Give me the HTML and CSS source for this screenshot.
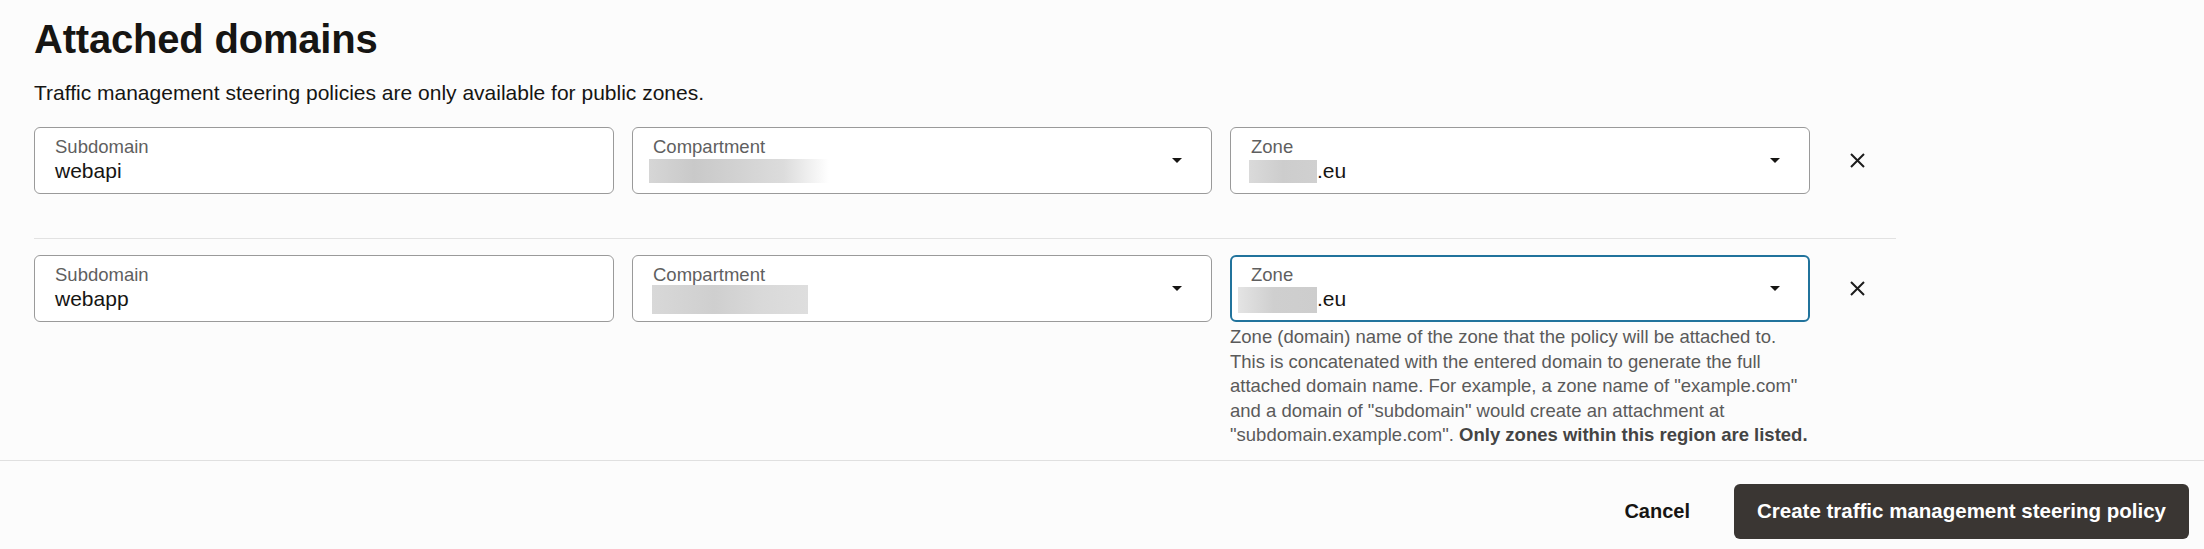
FILE: index.html
```html
<!DOCTYPE html>
<html lang="en">
<head>
<meta charset="utf-8">
<title>Attached domains</title>
<link rel="stylesheet" href="styles.css">
</head>
<body>
<div class="page">
  <section class="content">
    <h2 class="title">Attached domains</h2>
    <p class="intro">Traffic management steering policies are only available for public zones.</p>

    <div class="row row-first">
      <div class="field">
        <div class="field-body">
          <div class="label">Subdomain</div>
          <div class="value">webapi</div>
        </div>
      </div>
      <div class="field">
        <div class="field-body">
          <div class="label">Compartment</div>
          <div class="value"><span class="blur blur-c1"></span></div>
        </div>
        <svg class="caret" width="10" height="5" viewBox="0 0 10 5"><path d="M0 0H10L5 5Z"/></svg>
      </div>
      <div class="field">
        <div class="field-body">
          <div class="label">Zone</div>
          <div class="value"><span class="blur blur-z1"></span><span>.eu</span></div>
        </div>
        <svg class="caret" width="10" height="5" viewBox="0 0 10 5"><path d="M0 0H10L5 5Z"/></svg>
      </div>
      <button class="remove" aria-label="Remove">
        <svg width="15" height="15" viewBox="0 0 15 15"><path d="M1 1L14 14M14 1L1 14"/></svg>
      </button>
    </div>

    <div class="row">
      <div class="field">
        <div class="field-body">
          <div class="label">Subdomain</div>
          <div class="value">webapp</div>
        </div>
      </div>
      <div class="field">
        <div class="field-body">
          <div class="label">Compartment</div>
          <div class="value"><span class="blur blur-c2"></span></div>
        </div>
        <svg class="caret" width="10" height="5" viewBox="0 0 10 5"><path d="M0 0H10L5 5Z"/></svg>
      </div>
      <div class="zone-col">
        <div class="field focused">
          <div class="field-body">
            <div class="label">Zone</div>
            <div class="value"><span class="blur blur-z2"></span><span>.eu</span></div>
          </div>
          <svg class="caret" width="10" height="5" viewBox="0 0 10 5"><path d="M0 0H10L5 5Z"/></svg>
        </div>
        <p class="help">Zone (domain) name of the zone that the policy will be attached to. This is concatenated with the entered domain to generate the full attached domain name. For example, a zone name of "example.com" and a domain of "subdomain" would create an attachment at "subdomain.example.com". <strong>Only zones within this region are listed.</strong></p>
      </div>
      <button class="remove" aria-label="Remove">
        <svg width="15" height="15" viewBox="0 0 15 15"><path d="M1 1L14 14M14 1L1 14"/></svg>
      </button>
    </div>
  </section>

  <footer class="footer">
    <button class="btn-cancel">Cancel</button>
    <button class="btn-primary">Create traffic management steering policy</button>
  </footer>
</div>
</body>
</html>
```
FILE: styles.css
```css
* { box-sizing: border-box; }

html, body {
  margin: 0;
  padding: 0;
  background: #fcfcfc;
}

body {
  font-family: "Liberation Sans", Arial, sans-serif;
  color: #161513;
}

.page {
  width: 2204px;
  height: 549px;
  overflow: hidden;
}

.content {
  padding: 0 0 0 34px;
}

.title {
  margin: 0;
  padding-top: 16px;
  font-size: 40px;
  line-height: 46px;
  font-weight: 700;
  letter-spacing: -0.2px;
}

.intro {
  margin: 19px 0 0;
  font-size: 21px;
  line-height: 24px;
}

.row {
  width: 1862px;
  display: grid;
  grid-template-columns: 580px 580px 580px 1fr;
  column-gap: 18px;
  align-items: start;
}

.row-first {
  margin-top: 22px;
  padding-bottom: 44px;
  border-bottom: 1px solid #e2e2e2;
}

.row + .row {
  margin-top: 16px;
}

.field {
  height: 67px;
  display: flex;
  align-items: center;
  background: #fff;
  border: 1px solid #9a9a9a;
  border-radius: 6px;
  padding: 0 29px 0 20px;
}

.field.focused {
  border: 2px solid #21739c;
  padding: 0 28px 0 19px;
}

.field-body {
  flex: 1;
  align-self: flex-start;
  padding-top: 9px;
}

.field.focused .field-body {
  padding-top: 8px;
}

.label {
  font-size: 18.5px;
  line-height: 20px;
  color: #5f5f5f;
}

.value {
  margin-top: 2px;
  height: 24px;
  display: flex;
  align-items: flex-end;
  font-size: 21px;
  line-height: 24px;
  color: #161513;
}

.caret {
  flex: none;
  fill: #161513;
}

.blur {
  display: block;
  flex: none;
}

.blur-c1 {
  width: 180px;
  height: 24px;
  margin-left: -4px;
  background: linear-gradient(90deg, #d6d6d6 0%, #c9c9c9 25%, #d2d2d2 50%, #dcdcdc 75%, rgba(240,240,240,0) 100%);
}

.blur-c2 {
  width: 156px;
  height: 29px;
  margin-left: -1px;
  margin-bottom: -3px;
  background: linear-gradient(90deg, #d8d8d8 0%, #cfcfcf 40%, #d9d9d9 70%, #dedede 100%);
}

.blur-z1 {
  width: 68px;
  height: 23px;
  margin-left: -2px;
  background: linear-gradient(90deg, #dadada 0%, #cdcdcd 50%, #d0d0d0 100%);
}

.blur-z2 {
  width: 79px;
  height: 26px;
  margin-left: -13px;
  margin-bottom: -2px;
  background: linear-gradient(90deg, #e4e4e4 0%, #cfcfcf 45%, #cdcdcd 100%);
}

.remove {
  width: 30px;
  height: 67px;
  margin-left: 14px;
  padding: 0;
  border: 0;
  background: transparent;
  display: flex;
  align-items: center;
  justify-content: center;
}

.remove svg {
  stroke: #1c1c1c;
  stroke-width: 2;
  fill: none;
}

.help {
  margin: 3px 0 0;
  width: 580px;
  font-size: 18.5px;
  line-height: 24.6px;
  color: #5a5a5a;
}

.help strong {
  color: #444;
}

.footer {
  margin-top: 12px;
  border-top: 1px solid #e0e0e0;
  padding: 23px 15px 0 0;
  display: flex;
  justify-content: flex-end;
  align-items: center;
}

.btn-cancel {
  margin-right: 44px;
  padding: 0;
  border: 0;
  background: transparent;
  font-family: inherit;
  font-size: 20px;
  font-weight: 700;
  color: #161513;
}

.btn-primary {
  height: 55px;
  padding: 0 23px;
  border: 0;
  border-radius: 6px;
  background: #3a3633;
  color: #fff;
  font-family: inherit;
  font-size: 20.5px;
  font-weight: 700;
}
```
